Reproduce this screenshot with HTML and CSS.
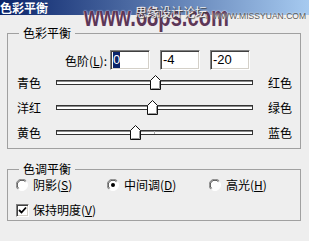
FILE: index.html
```html
<!DOCTYPE html>
<html lang="zh">
<head>
    <meta charset="UTF-8">
    <title>色彩平衡</title>
    <link rel="stylesheet" href="styles.css">
</head>
<body>
    <div class="dialog">
        <div class="titlebar">色彩平衡</div>

        <!-- site watermark stamped over the screenshot -->
        <div class="watermark">
            <span class="wm-big">www.68ps.com</span>
            <span class="wm-cn">思缘设计论坛</span>
            <span class="wm-small">WWW.MISSYUAN.COM</span>
        </div>

        <fieldset class="group group-balance">
            <legend>色彩平衡</legend>
            <div class="levels">
                <span class="levels-label">色阶(<u>L</u>):</span>
                <div class="num"><span class="sel">0</span></div>
                <div class="num">-4</div>
                <div class="num">-20</div>
            </div>

            <div class="slider-row">
                <span class="lbl">青色</span>
                <div class="track">
                    <span class="tick"></span>
                    <svg class="thumb" style="left:93px" width="11" height="15" viewBox="0 0 11 15"><polygon points="0.5,5.5 5.5,0.5 10.5,5.5 10.5,14.5 0.5,14.5" fill="#fff" stroke="#111"/><polyline points="9.5,6 9.5,13.5 1.5,13.5" fill="none" stroke="#999"/></svg>
                </div>
                <span class="lbl">红色</span>
            </div>
            <div class="slider-row">
                <span class="lbl">洋红</span>
                <div class="track">
                    <span class="tick"></span>
                    <svg class="thumb" style="left:90px" width="11" height="15" viewBox="0 0 11 15"><polygon points="0.5,5.5 5.5,0.5 10.5,5.5 10.5,14.5 0.5,14.5" fill="#fff" stroke="#111"/><polyline points="9.5,6 9.5,13.5 1.5,13.5" fill="none" stroke="#999"/></svg>
                </div>
                <span class="lbl">绿色</span>
            </div>
            <div class="slider-row">
                <span class="lbl">黄色</span>
                <div class="track">
                    <span class="tick"></span>
                    <svg class="thumb" style="left:73px" width="11" height="15" viewBox="0 0 11 15"><polygon points="0.5,5.5 5.5,0.5 10.5,5.5 10.5,14.5 0.5,14.5" fill="#fff" stroke="#111"/><polyline points="9.5,6 9.5,13.5 1.5,13.5" fill="none" stroke="#999"/></svg>
                </div>
                <span class="lbl">蓝色</span>
            </div>
        </fieldset>

        <fieldset class="group group-tone">
            <legend>色调平衡</legend>
            <div class="radios">
                <label class="opt">
                    <svg width="12" height="12" viewBox="0 0 12 12"><circle cx="6" cy="6" r="5.5" fill="#fff" stroke="#fff"/><path d="M1.8 10.2 A5.5 5.5 0 0 1 10.2 1.8" fill="none" stroke="#808080"/><path d="M2.6 9.4 A4.5 4.5 0 0 1 9.4 2.6" fill="none" stroke="#404040"/></svg>
                    <span>阴影(<u>S</u>)</span>
                </label>
                <label class="opt">
                    <svg width="12" height="12" viewBox="0 0 12 12"><circle cx="6" cy="6" r="5.5" fill="#fff" stroke="#fff"/><path d="M1.8 10.2 A5.5 5.5 0 0 1 10.2 1.8" fill="none" stroke="#808080"/><path d="M2.6 9.4 A4.5 4.5 0 0 1 9.4 2.6" fill="none" stroke="#404040"/><circle cx="6" cy="6" r="2" fill="#000"/></svg>
                    <span>中间调(<u>D</u>)</span>
                </label>
                <label class="opt">
                    <svg width="12" height="12" viewBox="0 0 12 12"><circle cx="6" cy="6" r="5.5" fill="#fff" stroke="#fff"/><path d="M1.8 10.2 A5.5 5.5 0 0 1 10.2 1.8" fill="none" stroke="#808080"/><path d="M2.6 9.4 A4.5 4.5 0 0 1 9.4 2.6" fill="none" stroke="#404040"/></svg>
                    <span>高光(<u>H</u>)</span>
                </label>
            </div>
            <label class="check">
                <span class="box"><svg width="9" height="9" viewBox="0 0 9 9"><polyline points="1,4 3.5,6.5 8,1.5" fill="none" stroke="#000" stroke-width="1.8"/></svg></span>
                <span>保持明度(<u>V</u>)</span>
            </label>
        </fieldset>
    </div>
</body>
</html>
```

FILE: styles.css
```css
body {
    margin: 0;
    background-color: #eeeeee;
    font-family: "Noto Sans CJK SC", sans-serif;
    font-size: 12px;
    color: #000;
}
.dialog {
    position: relative;
    width: 309px;
    height: 241px;
    overflow: hidden;
}
.titlebar {
    height: 15px;
    line-height: 15px;
    background: linear-gradient(to right, #0a246a, #a6caf0);
    color: #fff;
    font-weight: bold;
}
.watermark {
    position: absolute;
    left: 0;
    top: 0;
}
.wm-big {
    position: absolute;
    left: 84px;
    top: 1px;
    font-family: "Liberation Sans", sans-serif;
    font-weight: bold;
    font-size: 28px;
    line-height: 32px;
    color: #5c3757;
    white-space: nowrap;
    transform: scaleX(0.72);
    transform-origin: left;
    text-shadow: 0 0 1px #f4e6ee, 0 0 2px #f4e6ee;
}
.wm-cn {
    position: absolute;
    left: 135px;
    top: 5px;
    line-height: 14px;
    white-space: nowrap;
    color: #eeeeee;
    text-shadow: 1px 1px 1px #3a3a3a;
}
.wm-small {
    position: absolute;
    left: 213px;
    top: 11px;
    font-family: "Liberation Sans", sans-serif;
    font-size: 9px;
    line-height: 11px;
    white-space: nowrap;
    color: #5a5a5a;
    transform: scaleX(0.95);
    transform-origin: left;
    text-shadow: 0 0 2px #fff;
}
.group {
    border: 1px solid #a0a0a0;
    margin: 0 8px 0 7px;
    padding: 0;
    min-width: 0;
}
.group legend {
    margin-left: 11px;
    padding: 0 4px;
    line-height: 14px;
}
.group-balance {
    margin-top: 11px;
    padding-bottom: 3px;
}
.group-tone {
    margin-top: 13px;
    padding-bottom: 2px;
}
.levels {
    display: flex;
    align-items: center;
    gap: 10px;
    margin-top: 10px;
    height: 20px;
}
.levels-label {
    width: 99px;
    margin-right: -7px;
    text-align: right;
}
.num {
    box-sizing: border-box;
    width: 40px;
    height: 20px;
    padding: 1px 0 0 2px;
    background: #fff;
    border: 1px solid;
    border-color: #808080 #ffffff #ffffff #808080;
    box-shadow: inset 1px 1px #404040, inset -1px -1px #d4d0c8;
    font-family: "Liberation Sans", sans-serif;
    font-size: 13px;
    line-height: 16px;
}
.sel {
    display: inline-block;
    background: #0a246a;
    color: #fff;
}
.slider-row {
    display: flex;
    align-items: center;
    height: 25px;
    padding-left: 9px;
}
.slider-row:first-of-type {
    margin-top: 8px;
}
.lbl {
    width: 24px;
    white-space: nowrap;
}
.track {
    position: relative;
    box-sizing: border-box;
    width: 197px;
    height: 5px;
    margin: 0 15px;
    background: #fff;
    border: 1px solid #333;
    box-shadow: inset 0 1px #8a8a8a;
}
.tick {
    position: absolute;
    left: 97px;
    top: 0;
    width: 1px;
    height: 3px;
    background: #b0b0b0;
}
.thumb {
    position: absolute;
    top: -6px;
    display: block;
}
.radios {
    display: grid;
    grid-template-columns: 91px 102px auto;
    height: 16px;
    margin-top: 1px;
    padding-left: 8px;
}
.opt, .check {
    display: flex;
    align-items: center;
    gap: 5px;
    line-height: 16px;
    white-space: nowrap;
}
.opt svg {
    display: block;
}
.check {
    height: 16px;
    margin-top: 9px;
    padding-left: 8px;
    gap: 4px;
}
.box {
    box-sizing: border-box;
    display: flex;
    align-items: center;
    justify-content: center;
    width: 13px;
    height: 13px;
    background: #fff;
    border: 1px solid;
    border-color: #808080 #ffffff #ffffff #808080;
    box-shadow: inset 1px 1px #404040, inset -1px -1px #d4d0c8;
}
.box svg {
    display: block;
}
```
